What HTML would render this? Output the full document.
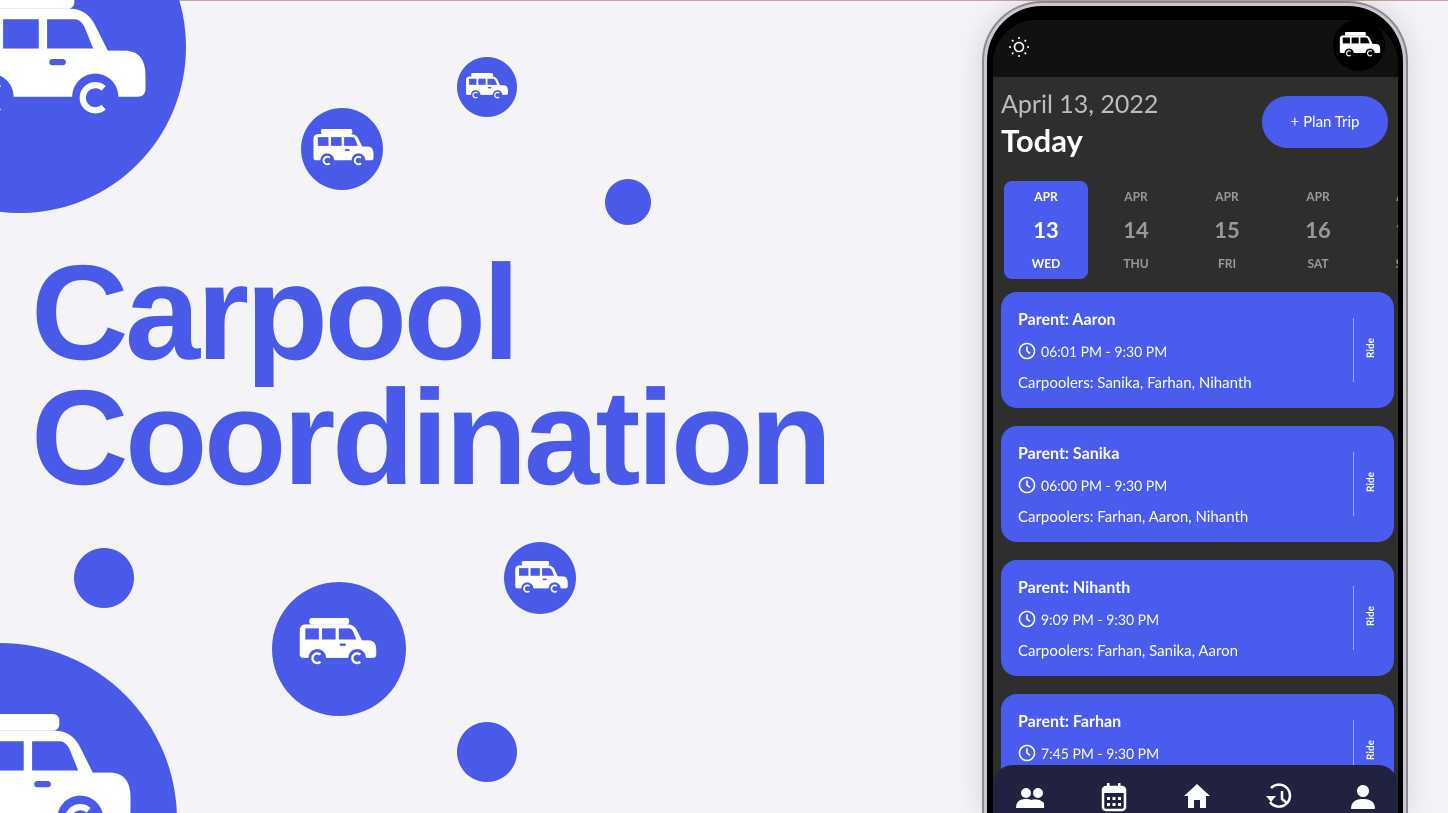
<!DOCTYPE html>
<html><head><meta charset="utf-8"><style>
*{margin:0;padding:0;box-sizing:border-box}
html{width:1448px;height:813px;overflow:hidden}
body{width:1448px;height:813px;overflow:hidden;background:#f3f3f8;position:relative;font-family:"Liberation Sans",sans-serif}
.abs{position:absolute}
.title{position:absolute;left:31px;font-weight:bold;font-size:135px;color:#4a5ae8;letter-spacing:-3.5px;line-height:1}
.clip{position:absolute;left:0;top:0;width:1448px;height:813px;overflow:hidden}
.phone{position:absolute;left:984px;top:3px;width:422px;height:810px;border-radius:58px 58px 0 0;background:#000;border:3px solid #c9c9cf;border-bottom:none;box-shadow:0 0 0 2px #8a8a90,0 0 30px rgba(0,0,0,.15)}
.screen{position:absolute;left:993px;top:20px;width:405px;height:793px;border-radius:44px 44px 0 0;overflow:hidden;background:#2e2e2e;font-family:"Lato","Liberation Sans",sans-serif}
.card{position:absolute;left:8px;width:393px;height:116px;background:#4a5cee;border-radius:16px;color:#fff}
.card .t{position:absolute;left:17px;top:18px;font-size:16px;font-weight:bold}
.card .tm{position:absolute;left:17px;top:50px;font-size:14px;display:flex;align-items:center;gap:5px}
.card .cp{position:absolute;left:17px;top:82px;font-size:15px}
.card .dv{position:absolute;left:352px;top:26px;width:1px;height:64px;background:rgba(255,255,255,.5)}
.card .rd{position:absolute;left:360px;top:50px;font-size:10px;font-weight:bold;transform:rotate(-90deg)}
.day{position:absolute;top:161px;width:84px;height:98px;text-align:center;color:#9a9a9a;font-weight:bold}
.day .a{position:absolute;top:8px;width:100%;font-size:12px}
.day .n{position:absolute;top:35px;width:100%;font-size:22px}
.day .w{position:absolute;top:75px;width:100%;font-size:12px}
</style></head><body>
<svg width="0" height="0" style="position:absolute"><defs>
<symbol id="car" viewBox="0 0 100 64">
<rect x="14" y="0" width="50" height="8" rx="3" fill="#fff"/>
<path d="M10 8H62Q70 8 74 16L80 28H88Q98 28 98 40V46Q98 50 94 50H6Q2 50 2 46V16Q2 8 10 8Z" fill="#fff"/>
<rect x="9" y="13" width="17" height="14" fill="#4a5ae8"/>
<rect x="30" y="13" width="17" height="14" fill="#4a5ae8"/>
<path d="M51 13H64Q67 13 69 17L73 27H51Z" fill="#4a5ae8"/>
<rect x="52" y="32" width="8" height="3" rx="1.5" fill="#4a5ae8"/>
<circle cx="24" cy="50" r="11" fill="#4a5ae8"/><circle cx="74" cy="50" r="11" fill="#4a5ae8"/>
<path d="M28 46A6 6 0 1 0 28 55" stroke="#fff" stroke-width="3" fill="none"/>
<path d="M78 46A6 6 0 1 0 78 55" stroke="#fff" stroke-width="3" fill="none"/>
</symbol>
<symbol id="carb" viewBox="0 0 100 64">
<rect x="14" y="0" width="50" height="8" rx="3" fill="#fff"/>
<path d="M10 8H62Q70 8 74 16L80 28H88Q98 28 98 40V46Q98 50 94 50H6Q2 50 2 46V16Q2 8 10 8Z" fill="#fff"/>
<rect x="9" y="13" width="17" height="14" fill="#000"/>
<rect x="30" y="13" width="17" height="14" fill="#000"/>
<path d="M51 13H64Q67 13 69 17L73 27H51Z" fill="#000"/>
<circle cx="24" cy="50" r="11" fill="#000"/><circle cx="74" cy="50" r="11" fill="#000"/>
<path d="M28 46A6 6 0 1 0 28 55" stroke="#fff" stroke-width="3" fill="none"/>
<path d="M78 46A6 6 0 1 0 78 55" stroke="#fff" stroke-width="3" fill="none"/>
</symbol>
</defs></svg>
<div class="clip">
<div class="abs" style="left:0;top:0;width:1448px;height:1px;background:#c8a49c"></div>

<svg class="abs" style="left:0;top:0" width="960" height="813">
<circle cx="20" cy="47" r="166" fill="#4a5ae8"/>
<use href="#car" x="-60" y="-8" width="210" height="134"/>
<circle cx="0" cy="820" r="177" fill="#4a5ae8"/>
<use href="#car" x="-75" y="714" width="210" height="134"/>
<circle cx="487" cy="87" r="30" fill="#4a5ae8"/>
<use href="#car" x="465" y="73" width="44" height="28"/>
<circle cx="342" cy="149" r="41" fill="#4a5ae8"/>
<use href="#car" x="312" y="129" width="63" height="40"/>
<circle cx="628" cy="202" r="23" fill="#4a5ae8"/>
<circle cx="104" cy="578" r="30" fill="#4a5ae8"/>
<circle cx="540" cy="578" r="36" fill="#4a5ae8"/>
<use href="#car" x="514" y="561" width="55" height="35"/>
<circle cx="339" cy="649" r="67" fill="#4a5ae8"/>
<use href="#car" x="298" y="618" width="80" height="51"/>
<circle cx="487" cy="752" r="30" fill="#4a5ae8"/>
</svg>

<div class="title" style="top:245px">Carpool</div>
<div class="title" style="top:370px">Coordination</div>

<div class="phone"></div>
<div class="screen">
  <div class="abs" style="left:0;top:0;width:405px;height:57px;background:#111"></div>
  <svg class="abs" style="left:15px;top:16px" width="22" height="22" viewBox="0 0 22 22" fill="none" stroke="#fff" stroke-width="1.6"><circle cx="11" cy="11" r="4.5"/><path d="M11 1v2M11 19v2M1 11h2M19 11h2M4 4l1.4 1.4M16.6 16.6L18 18M4 18l1.4-1.4M16.6 5.4L18 4"/></svg>
  <div class="abs" style="left:340px;top:-1px;width:52px;height:52px;border-radius:50%;background:#000"></div>
  <svg class="abs" style="left:346px;top:12px" width="42" height="27"><use href="#carb" width="42" height="27"/></svg>
  <div class="abs" style="left:8px;top:69px;font-size:25px;color:#bdbdbd">April 13, 2022</div>
  <div class="abs" style="left:8px;top:101px;font-size:31px;font-weight:bold;color:#fff">Today</div>
  <div class="abs" style="left:269px;top:76px;width:126px;height:52px;border-radius:26px;background:#4a5cee;color:#fff;font-size:15px;text-align:center;line-height:52px">+ Plan Trip</div>
  <div class="day" style="left:11px;background:#4a5cee;border-radius:8px;color:#fff"><div class="a">APR</div><div class="n">13</div><div class="w">WED</div></div>
  <div class="day" style="left:101px"><div class="a">APR</div><div class="n">14</div><div class="w">THU</div></div>
  <div class="day" style="left:192px"><div class="a">APR</div><div class="n">15</div><div class="w">FRI</div></div>
  <div class="day" style="left:283px"><div class="a">APR</div><div class="n">16</div><div class="w">SAT</div></div>
  <div class="day" style="left:373px"><div class="a">APR</div><div class="n">17</div><div class="w">SUN</div></div>

  <div class="card" style="top:272px"><div class="t">Parent: Aaron</div><div class="tm"><svg width="18" height="18" viewBox="0 0 18 18" fill="none" stroke="#fff" stroke-width="1.6"><circle cx="9" cy="9" r="7.5"/><path d="M9 4.5V9l3 2.5"/></svg>06:01 PM - 9:30 PM</div><div class="cp">Carpoolers: Sanika, Farhan, Nihanth</div><div class="dv"></div><div class="rd">Ride</div></div>
  <div class="card" style="top:406px"><div class="t">Parent: Sanika</div><div class="tm"><svg width="18" height="18" viewBox="0 0 18 18" fill="none" stroke="#fff" stroke-width="1.6"><circle cx="9" cy="9" r="7.5"/><path d="M9 4.5V9l3 2.5"/></svg>06:00 PM - 9:30 PM</div><div class="cp">Carpoolers: Farhan, Aaron, Nihanth</div><div class="dv"></div><div class="rd">Ride</div></div>
  <div class="card" style="top:540px"><div class="t">Parent: Nihanth</div><div class="tm"><svg width="18" height="18" viewBox="0 0 18 18" fill="none" stroke="#fff" stroke-width="1.6"><circle cx="9" cy="9" r="7.5"/><path d="M9 4.5V9l3 2.5"/></svg>9:09 PM - 9:30 PM</div><div class="cp">Carpoolers: Farhan, Sanika, Aaron</div><div class="dv"></div><div class="rd">Ride</div></div>
  <div class="card" style="top:674px;height:100px"><div class="t">Parent: Farhan</div><div class="tm"><svg width="18" height="18" viewBox="0 0 18 18" fill="none" stroke="#fff" stroke-width="1.6"><circle cx="9" cy="9" r="7.5"/><path d="M9 4.5V9l3 2.5"/></svg>7:45 PM - 9:30 PM</div><div class="dv"></div><div class="rd">Ride</div></div>

  <div class="abs" style="left:0;top:745px;width:405px;height:48px;background:#20223f;border-radius:20px 20px 0 0"></div>
  <svg class="abs" style="left:0;top:745px" width="405" height="48" fill="#fff">
   <g transform="translate(0,-17)">
    <circle cx="33" cy="45" r="5"/><circle cx="45" cy="45" r="5"/><path d="M23 60q0-9 10-9t10 9zM38 52q8-2 13 3v5h-8q0-5-5-8z"/>
    <rect x="110" y="39" width="22" height="23" rx="3" fill="none" stroke="#fff" stroke-width="2.5"/><rect x="110" y="39" width="22" height="6" /><rect x="114" y="35" width="2.5" height="6"/><rect x="125" y="35" width="2.5" height="6"/><g><rect x="114" y="49" width="3" height="3"/><rect x="119.5" y="49" width="3" height="3"/><rect x="125" y="49" width="3" height="3"/><rect x="114" y="55" width="3" height="3"/><rect x="119.5" y="55" width="3" height="3"/><rect x="125" y="55" width="3" height="3"/></g>
    <path d="M204 36l-13 12h4v12h6v-8h6v8h6V48h4z"/>
    <path d="M278 40a11 11 0 1 1-1 14" fill="none" stroke="#fff" stroke-width="2.5"/><path d="M273 48l5 6 5-6z"/><path d="M289 43v8l5 4" fill="none" stroke="#fff" stroke-width="2.5"/>
    <circle cx="370" cy="43" r="6"/><path d="M358 61q0-10 12-10t12 10z"/>
   </g>
  </svg>
</div>
</div>
</body></html>
